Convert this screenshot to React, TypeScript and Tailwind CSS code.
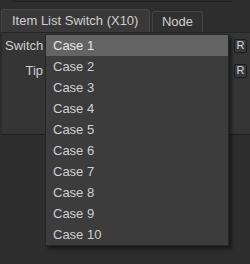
import { useState } from "react";

const cases = Array.from({ length: 10 }, (_, i) => `Case ${i + 1}`);

function ResetButton() {
  return (
    <div className="w-[13px] h-[14px] rounded-[2px] border border-[#1c1c1c] bg-[#3a3a3a] flex items-center justify-center text-[11px] leading-none text-[#c8d8e8]">
      R
    </div>
  );
}

export default function App() {
  const [selected] = useState(0);

  return (
    <div
      className="relative w-[250px] h-[264px] overflow-hidden bg-[#2d2d2d] text-[13px] text-[#d0d0d0]"
      style={{ fontFamily: '"Liberation Sans", Arial, sans-serif' }}
    >
      {/* bottom edge of the widget above */}
      <div className="ml-[12px] w-[220px] h-[2px] rounded-b-[3px] border-b border-x border-[#1f1f1f] bg-[#2a2a2a]" />

      {/* tabs */}
      <div className="mt-[7px] flex items-end gap-[2px] pl-[1px]">
        <div className="h-[23px] w-[149px] rounded-t-[3px] border border-b-0 border-[#474747] bg-[#393939] flex items-center pl-[10px]">
          Item List Switch (X10)
        </div>
        <div className="h-[21px] w-[51px] rounded-t-[3px] border border-b-0 border-[#444] bg-[#303030] flex items-center justify-center">
          Node
        </div>
      </div>

      {/* panel */}
      <div className="ml-[1px] h-[103px] border border-r-0 border-t-[#242424] border-l-[#2a2a2a] border-b-[#1e1e1e] bg-[#353535] pt-[4px]">
        <div className="flex items-center h-[17px] pr-[3px]">
          <span className="w-[42px] pl-[3px]">Switch</span>
          <div className="flex-1" />
          <ResetButton />
        </div>
        <div className="mt-[8px] flex items-center h-[17px] pr-[3px]">
          <span className="w-[41px] text-right">Tip</span>
          <div className="flex-1" />
          <ResetButton />
        </div>
      </div>

      {/* dropdown list */}
      <div className="absolute left-[45px] top-[34px] w-[184px] border border-[#262626] bg-[#3c3c3c] shadow-[3px_3px_3px_rgba(0,0,0,0.45)]">
        {cases.map((c, i) => (
          <div
            key={c}
            className={
              "h-[21px] flex items-center pl-[7px] " +
              (i === selected ? "bg-[#646464] text-[#e6e6e6]" : "")
            }
          >
            {c}
          </div>
        ))}
      </div>
    </div>
  );
}
